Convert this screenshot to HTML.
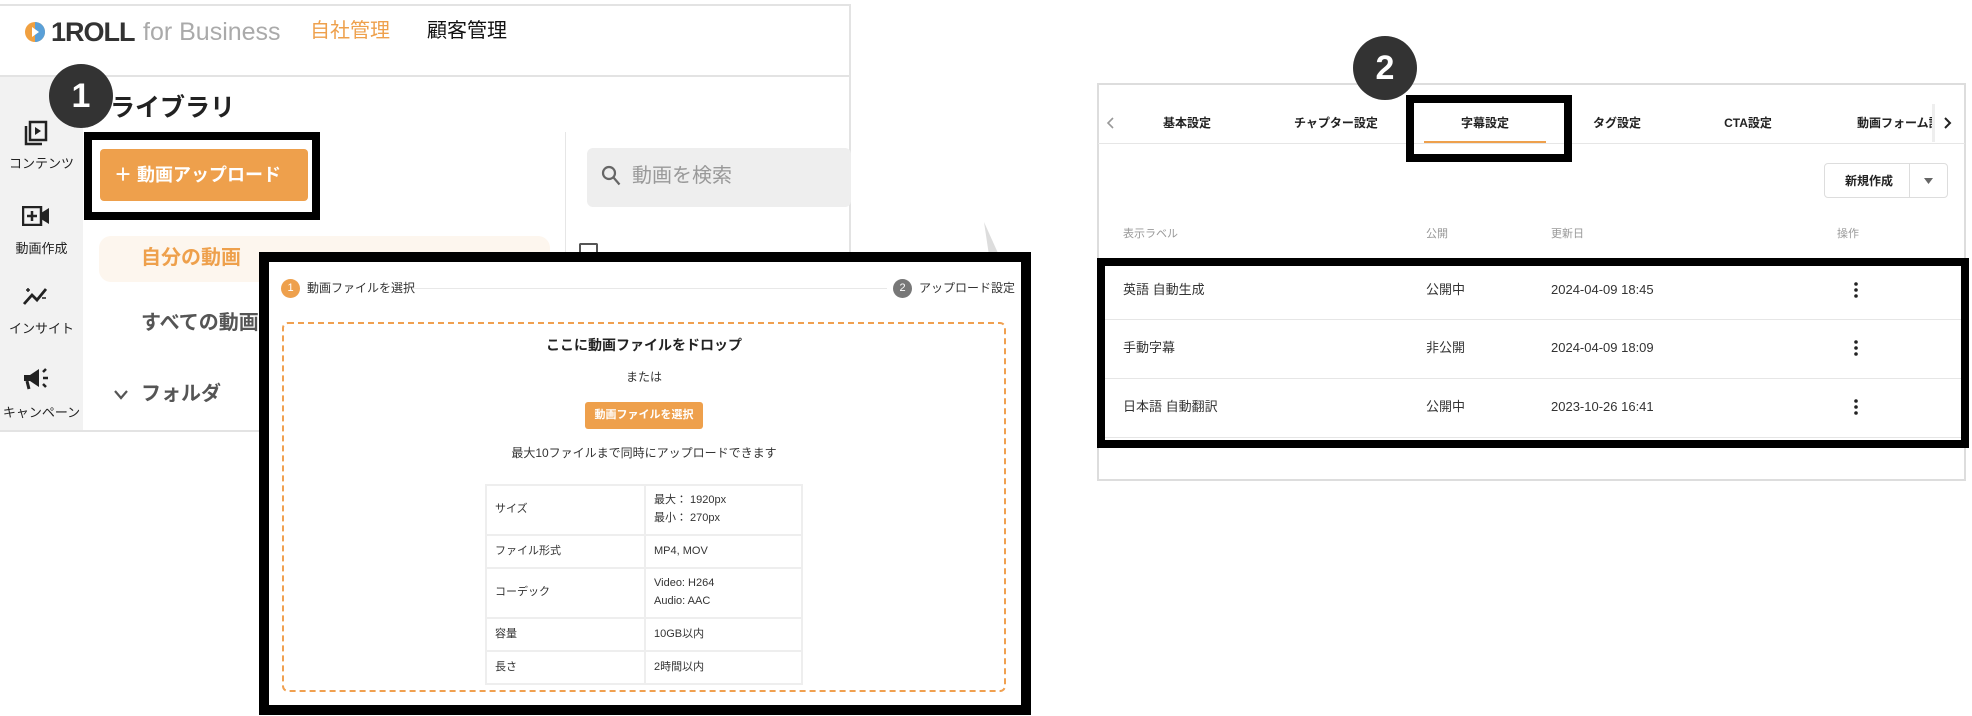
<!DOCTYPE html>
<html><head><meta charset="utf-8"><style>
*{margin:0;padding:0;box-sizing:border-box}
body{width:1972px;height:716px;background:#fff;position:relative;overflow:hidden;font-family:"Liberation Sans","Noto Sans CJK JP",sans-serif;color:#333}
.a{position:absolute}
.t{position:absolute;white-space:nowrap;line-height:1}
.badge{position:absolute;width:64px;height:64px;border-radius:50%;background:#333;color:#fff;font-weight:bold;font-size:34px;text-align:center;line-height:64px}
.blk{position:absolute;border:9px solid #000}
.side{font-size:13px;color:#222;text-align:center;width:83px;left:0}
td{border:2px solid #eee;font-size:11px;padding:0 8px;vertical-align:middle;color:#333;line-height:1.6}
</style></head><body>

<!-- left panel -->
<div class="a" style="left:0;top:4px;width:851px;height:428px;border:2px solid #e3e3e3;border-left:none"></div>
<div class="a" style="left:0;top:75px;width:851px;height:2px;background:#e3e3e3"></div>
<svg class="a" style="left:24px;top:20px" width="22" height="24" viewBox="0 0 22 24"><circle cx="11" cy="12" r="10" fill="#f0a040"/><path d="M11 2a10 10 0 0 1 0 20z" fill="#5aa0d8"/><path d="M8 7l7 5-7 5z" fill="#fff"/></svg>
<div class="t" style="left:51px;top:19px;font-size:27px;font-weight:bold;color:#333;letter-spacing:-1px">1ROLL</div>
<div class="t" style="left:143px;top:20px;font-size:25px;color:#aaa">for Business</div>
<div class="t" style="left:310px;top:21px;font-size:20px;color:#eea04c">自社管理</div>
<div class="t" style="left:427px;top:21px;font-size:20px;color:#111">顧客管理</div>

<div class="a" style="left:0;top:77px;width:83px;height:353px;background:#f2f2f2"></div>
<svg class="a" style="left:23px;top:120px" width="25" height="26" viewBox="0 0 25 26" fill="none" stroke="#222" stroke-width="2.5"><rect x="7" y="2" width="16" height="18"/><path d="M3 6v18h16"/><path d="M12 7l6 4-6 4z" fill="#222" stroke="none"/></svg>
<div class="t side" style="top:157px">コンテンツ</div>
<svg class="a" style="left:22px;top:206px" width="28" height="20" viewBox="0 0 28 20"><rect x="1" y="1" width="18" height="18" fill="none" stroke="#222" stroke-width="2.5"/><path d="M10 5v10M5 10h10" stroke="#222" stroke-width="2.5"/><path d="M19 7l8-5v16l-8-5z" fill="#222"/></svg>
<div class="t side" style="top:242px">動画作成</div>
<svg class="a" style="left:22px;top:286px" width="28" height="20" viewBox="0 0 28 20" fill="none" stroke="#222" stroke-width="2.8"><path d="M2 18l8-9 5 5 9-11"/><path d="M4 4h4M6 2v4M20 12h4" stroke-width="1.5"/></svg>
<div class="t side" style="top:322px">インサイト</div>
<svg class="a" style="left:22px;top:367px" width="28" height="24" viewBox="0 0 28 24"><path d="M2 8h6l9-6v18l-9-6H2z" fill="#222"/><path d="M5 14l2 8" stroke="#222" stroke-width="3"/><path d="M21 5l3-3M21 11h5M21 17l3 3" stroke="#222" stroke-width="2.5"/></svg>
<div class="t side" style="top:406px">キャンペーン</div>

<div class="badge" style="left:49px;top:64px">1</div>
<div class="t" style="left:110px;top:96px;font-size:25px;font-weight:bold;color:#222">ライブラリ</div>
<div class="blk" style="left:84px;top:132px;width:236px;height:88px;border-width:8px"></div>
<div class="a" style="left:100px;top:149px;width:208px;height:52px;background:#eea04c;border-radius:4px;color:#fff;font-weight:bold;font-size:18px;line-height:52px;padding-left:14px">＋ 動画アップロード</div>
<div class="a" style="left:565px;top:132px;width:1px;height:300px;background:#e6e6e6"></div>
<div class="a" style="left:587px;top:148px;width:264px;height:59px;background:#eee;border-radius:6px"></div>
<svg class="a" style="left:601px;top:165px" width="20" height="22" viewBox="0 0 20 22" fill="none" stroke="#666" stroke-width="2.2"><circle cx="8" cy="8" r="6"/><path d="M12.5 12.5l6 7"/></svg>
<div class="t" style="left:632px;top:166px;font-size:20px;color:#999">動画を検索</div>
<div class="a" style="left:99px;top:236px;width:451px;height:46px;background:#fdf6ee;border-radius:12px"></div>
<div class="t" style="left:141px;top:248px;font-size:20px;font-weight:bold;color:#eea04c">自分の動画</div>
<div class="t" style="left:141px;top:313px;font-size:20px;font-weight:bold;color:#555">すべての動画</div>
<svg class="a" style="left:113px;top:389px" width="16" height="12" viewBox="0 0 16 12" fill="none" stroke="#555" stroke-width="2.2"><path d="M2 2l6 7 6-7"/></svg>
<div class="t" style="left:141px;top:384px;font-size:20px;font-weight:bold;color:#555">フォルダ</div>
<div class="a" style="left:579px;top:243px;width:19px;height:16px;border:2px solid #555;border-bottom:none;border-radius:2px 2px 0 0"></div>
<svg class="a" style="left:984px;top:222px" width="20" height="40"><path d="M0 0L18 40H6z" fill="#ddd"/></svg>

<!-- modal -->
<div class="a" style="left:259px;top:252px;width:772px;height:463px;background:#fff;border:10px solid #000"></div>
<div class="a" style="left:281px;top:279px;width:19px;height:19px;border-radius:50%;background:#eea04c;color:#fff;font-size:11px;text-align:center;line-height:19px">1</div>
<div class="t" style="left:307px;top:282px;font-size:12px;color:#333">動画ファイルを選択</div>
<div class="a" style="left:412px;top:288px;width:475px;height:1px;background:#e8e8e8"></div>
<div class="a" style="left:893px;top:279px;width:19px;height:19px;border-radius:50%;background:#777;color:#fff;font-size:11px;text-align:center;line-height:19px">2</div>
<div class="t" style="left:919px;top:282px;font-size:12px;color:#333">アップロード設定</div>
<div class="a" style="left:282px;top:322px;width:724px;height:370px;border:2px dashed #f0a050;border-radius:6px"></div>
<div class="t" style="left:544px;top:338px;width:200px;text-align:center;font-size:14px;font-weight:bold;color:#222">ここに動画ファイルをドロップ</div>
<div class="t" style="left:544px;top:371px;width:200px;text-align:center;font-size:12px;color:#333">または</div>
<div class="a" style="left:585px;top:402px;width:118px;height:27px;background:#eea04c;border-radius:3px;color:#fff;font-size:11px;font-weight:bold;text-align:center;line-height:27px">動画ファイルを選択</div>
<div class="t" style="left:494px;top:447px;width:300px;text-align:center;font-size:12px;color:#333">最大10ファイルまで同時にアップロードできます</div>
<table class="a" style="left:485px;top:484px;width:318px;border-collapse:collapse">
<tr style="height:50px"><td style="width:159px">サイズ</td><td>最大： 1920px<br>最小： 270px</td></tr>
<tr style="height:33px"><td>ファイル形式</td><td>MP4, MOV</td></tr>
<tr style="height:50px"><td>コーデック</td><td>Video: H264<br>Audio: AAC</td></tr>
<tr style="height:33px"><td>容量</td><td>10GB以内</td></tr>
<tr style="height:33px"><td>長さ</td><td>2時間以内</td></tr>
</table>

<!-- right panel -->
<div class="a" style="left:1097px;top:83px;width:869px;height:398px;border:2px solid #ddd"></div>
<div class="a" style="left:1098px;top:143px;width:867px;height:1px;background:#e6e6e6"></div>
<svg class="a" style="left:1106px;top:116px" width="10" height="14" viewBox="0 0 10 14" fill="none" stroke="#999" stroke-width="1.6"><path d="M7 2L2 7l5 5"/></svg>
<div class="t" style="left:1147px;top:117px;width:80px;text-align:center;font-size:12px;font-weight:bold;color:#222">基本設定</div>
<div class="t" style="left:1286px;top:117px;width:100px;text-align:center;font-size:12px;font-weight:bold;color:#222">チャプター設定</div>
<div class="t" style="left:1445px;top:117px;width:80px;text-align:center;font-size:12px;font-weight:bold;color:#222">字幕設定</div>
<div class="t" style="left:1577px;top:117px;width:80px;text-align:center;font-size:12px;font-weight:bold;color:#222">タグ設定</div>
<div class="t" style="left:1708px;top:117px;width:80px;text-align:center;font-size:12px;font-weight:bold;color:#222">CTA設定</div>
<div class="a" style="left:1857px;top:110px;width:75px;height:26px;overflow:hidden"><div class="t" style="left:0;top:7px;font-size:12px;font-weight:bold;color:#222">動画フォーム設定</div></div>
<div class="a" style="left:1932px;top:104px;width:3px;height:38px;background:#eee"></div>
<svg class="a" style="left:1942px;top:116px" width="10" height="14" viewBox="0 0 10 14" fill="none" stroke="#222" stroke-width="2"><path d="M3 2l5 5-5 5"/></svg>
<div class="a" style="left:1424px;top:141px;width:122px;height:2px;background:#eea04c"></div>
<div class="blk" style="left:1406px;top:95px;width:166px;height:67px;border-width:8px"></div>
<div class="badge" style="left:1353px;top:36px">2</div>

<div class="a" style="left:1824px;top:163px;width:124px;height:35px;border:1px solid #ddd;border-radius:4px"></div>
<div class="a" style="left:1909px;top:164px;width:1px;height:33px;background:#ddd"></div>
<div class="t" style="left:1834px;top:175px;width:70px;text-align:center;font-size:12px;font-weight:bold;color:#222">新規作成</div>
<svg class="a" style="left:1924px;top:178px" width="9" height="6"><path d="M0 0h9L4.5 6z" fill="#666"/></svg>

<div class="t" style="left:1123px;top:229px;font-size:11px;color:#999">表示ラベル</div>
<div class="t" style="left:1426px;top:229px;font-size:11px;color:#999">公開</div>
<div class="t" style="left:1551px;top:229px;font-size:11px;color:#999">更新日</div>
<div class="t" style="left:1837px;top:229px;font-size:11px;color:#999">操作</div>

<div class="a" style="left:1105px;top:319px;width:858px;height:1px;background:#e6e6e6"></div>
<div class="a" style="left:1105px;top:378px;width:858px;height:1px;background:#e6e6e6"></div>
<div class="a" style="left:1105px;top:437px;width:858px;height:1px;background:#e6e6e6"></div>
<div class="t" style="left:1123px;top:283px;font-size:13px">英語 自動生成</div>
<div class="t" style="left:1426px;top:283px;font-size:13px">公開中</div>
<div class="t" style="left:1551px;top:283px;font-size:13px">2024-04-09 18:45</div>
<div class="t" style="left:1123px;top:341px;font-size:13px">手動字幕</div>
<div class="t" style="left:1426px;top:341px;font-size:13px">非公開</div>
<div class="t" style="left:1551px;top:341px;font-size:13px">2024-04-09 18:09</div>
<div class="t" style="left:1123px;top:400px;font-size:13px">日本語 自動翻訳</div>
<div class="t" style="left:1426px;top:400px;font-size:13px">公開中</div>
<div class="t" style="left:1551px;top:400px;font-size:13px">2023-10-26 16:41</div>
<svg class="a" style="left:1853px;top:282px" width="6" height="16"><circle cx="3" cy="2" r="1.8" fill="#222"/><circle cx="3" cy="8" r="1.8" fill="#222"/><circle cx="3" cy="14" r="1.8" fill="#222"/></svg>
<svg class="a" style="left:1853px;top:340px" width="6" height="16"><circle cx="3" cy="2" r="1.8" fill="#222"/><circle cx="3" cy="8" r="1.8" fill="#222"/><circle cx="3" cy="14" r="1.8" fill="#222"/></svg>
<svg class="a" style="left:1853px;top:399px" width="6" height="16"><circle cx="3" cy="2" r="1.8" fill="#222"/><circle cx="3" cy="8" r="1.8" fill="#222"/><circle cx="3" cy="14" r="1.8" fill="#222"/></svg>
<div class="blk" style="left:1097px;top:258px;width:872px;height:190px;border-width:8px"></div>
</body></html>
